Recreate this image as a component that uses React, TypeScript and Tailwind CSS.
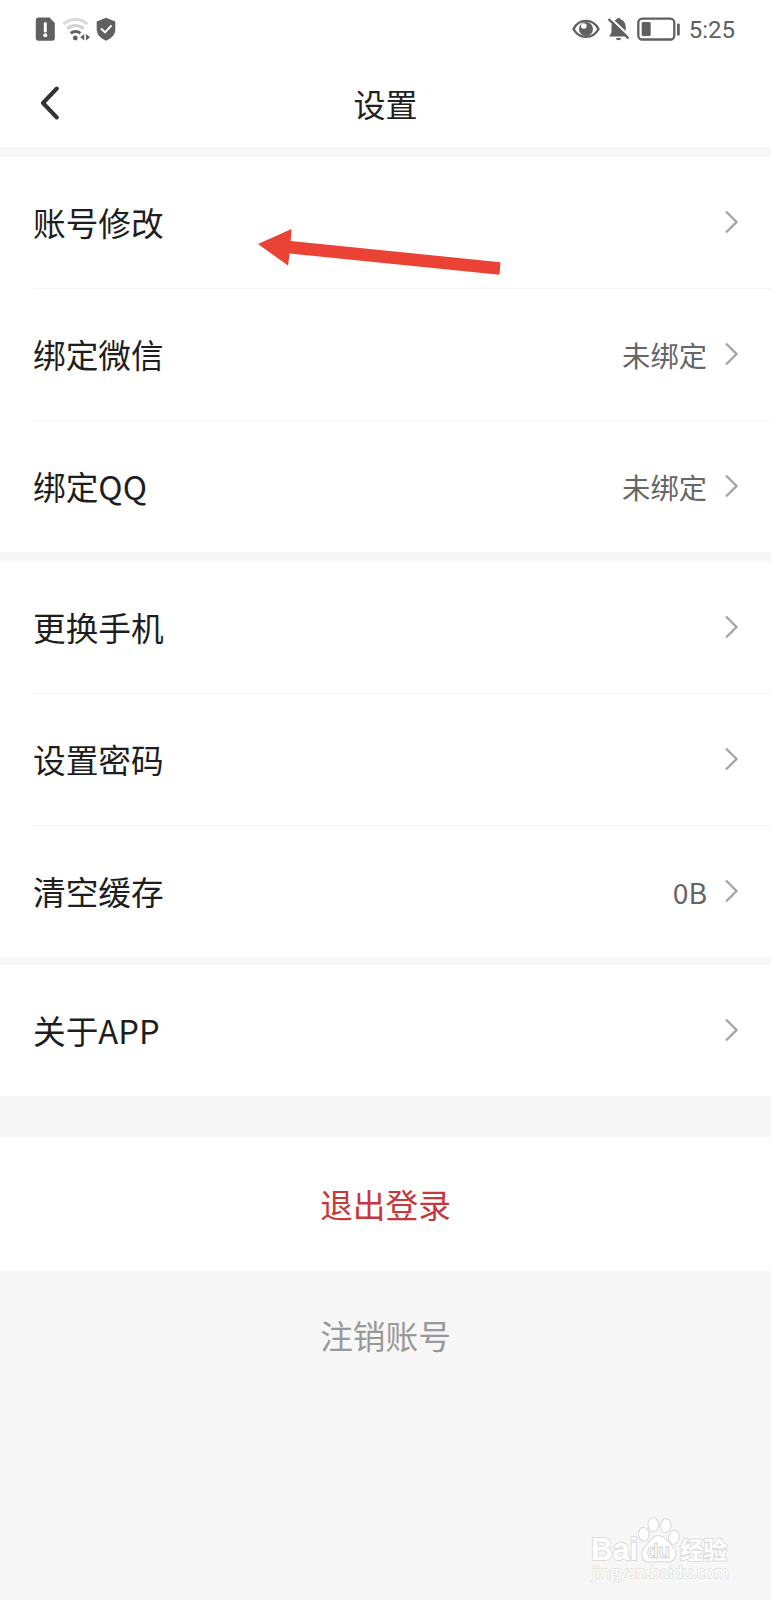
type Row = {
  label: string;
  value?: string;
};

const accountRows: Row[] = [
  { label: "账号修改" },
  { label: "绑定微信", value: "未绑定" },
  { label: "绑定QQ", value: "未绑定" },
];

const deviceRows: Row[] = [
  { label: "更换手机" },
  { label: "设置密码" },
  { label: "清空缓存", value: "0B" },
];

const aboutRows: Row[] = [{ label: "关于APP" }];

function StatusBar() {
  return (
    <div className="flex h-[58px] items-center justify-between pl-[35px] pr-9 text-[#606060]">
      <div className="flex items-center">
        <svg width="20" height="24" viewBox="0 0 20 24">
          <path
            d="M3.500.5h11L19.800 6v15a2.700 2.700 0 0 1-2.700 2.700H3.500A2.700 2.700 0 0 1 .8 21V3.200A2.700 2.700 0 0 1 3.500.5z"
            fill="currentColor"
          />
          <path d="M10.300 6.500v7.500" stroke="#fff" strokeWidth="3" strokeLinecap="round" />
          <circle cx="10.300" cy="18.300" r="2" fill="#fff" />
        </svg>
        <svg className="ml-[7px]" width="28" height="24" viewBox="0 0 28 24" fill="none">
          <path d="M1.500 7.200a17.500 17.500 0 0 1 24 0" stroke="#dadada" strokeWidth="3" />
          <path d="M5.300 11.800a12 12 0 0 1 16.400 0" stroke="#d2d2d2" strokeWidth="3" />
          <path d="M8.800 16.300a7 7 0 0 1 9.600 0" stroke="currentColor" strokeWidth="3" />
          <circle cx="13.300" cy="21" r="2.400" fill="currentColor" />
          <path d="M22.300 17v6.500l-4-3.250zM24 17v6.500l4-3.250z" fill="currentColor" />
        </svg>
        <svg className="ml-[6px]" width="20" height="24" viewBox="0 0 20 24">
          <path
            d="M10 .8 19.300 4.500v8c0 5-4 9-9.300 11.200C4.700 21.500.7 17.500.7 12.500v-8z"
            fill="currentColor"
          />
          <path
            d="m5.500 12 3.500 3.300 6-6.300"
            fill="none"
            stroke="#fff"
            strokeWidth="1.900"
            strokeLinecap="round"
          />
        </svg>
      </div>
      <div className="flex items-center">
        <svg width="28" height="20" viewBox="0 0 28 20">
          <path
            d="M1.500 10C7-.8 21-.8 26.500 10 21 20.500 7 20.500 1.500 10z"
            fill="none"
            stroke="currentColor"
            strokeWidth="2.400"
          />
          <circle cx="14" cy="10" r="7" fill="currentColor" />
          <circle cx="11.800" cy="7" r="2.800" fill="#fff" />
        </svg>
        <svg className="ml-[7px]" width="23" height="24" viewBox="0 0 23 24">
          <path
            d="M9.500 2.500C9.700.5 13.500.5 13.700 2.500c3.300 1 5 4 5 7.500v5.500l2 4H2.200l2.300-4V9c0-3.300 1.800-5.600 5-6.500z"
            fill="currentColor"
          />
          <path d="M9 21h5c0 3-5 3-5 0z" fill="currentColor" />
          <path d="M3.500 1 23 19.500" stroke="#fff" strokeWidth="2" />
          <path d="M1.500 2 21.500 21.500" stroke="currentColor" strokeWidth="2.400" />
        </svg>
        <svg className="ml-[7px]" width="44" height="24" viewBox="0 0 44 24">
          <rect x="1.300" y="1.700" width="36" height="20.800" rx="4" fill="none" stroke="currentColor" strokeWidth="2.300" />
          <rect x="4.700" y="5" width="9" height="14" rx="1.500" fill="currentColor" />
          <rect x="40" y="6.500" width="2.800" height="12" rx="1" fill="currentColor" />
        </svg>
        <span className="ml-2 mt-0.5 font-['Roboto',sans-serif] text-2xl leading-6">5:25</span>
      </div>
    </div>
  );
}

function Header() {
  return (
    <header className="flex h-[89px] items-center px-10">
      <svg
        width="20"
        height="34"
        viewBox="0 0 20 34"
        fill="none"
        stroke="#333"
        strokeWidth="4"
        strokeLinecap="round"
        strokeLinejoin="round"
      >
        <path d="M16.800 2.500 3 17l13.800 14.500" />
      </svg>
      <h1 className="flex-1 pr-5 text-center text-[32px] leading-10 text-[#222]">设置</h1>
    </header>
  );
}

function Chevron() {
  return (
    <svg width="14" height="24" viewBox="0 0 14 24" fill="none" stroke="#a6a6a6" strokeWidth="2.400">
      <path d="M1 1.500 11.500 12 1 22.500" />
    </svg>
  );
}

function SettingsGroup({ rows }: { rows: Row[] }) {
  return (
    <section className="bg-white pl-[33px]">
      {rows.map((row) => (
        <div
          key={row.label}
          className="flex h-[132px] items-center border-b border-[#f4f4f4] pb-0.5 pr-8 last:h-[131px] last:border-b-0"
        >
          <span className="flex-1 text-[32.7px] leading-10 text-[#1e1e1e]">{row.label}</span>
          {row.value && (
            <span className="mr-[18px] mt-0.5 text-[28.3px] leading-9 text-[#666]">{row.value}</span>
          )}
          <Chevron />
        </div>
      ))}
    </section>
  );
}

function PointerArrow() {
  return (
    <svg className="absolute left-[256px] top-[226px]" width="248" height="52" viewBox="0 0 248 52">
      <path d="M2 18 35.500 3l-.8 12L244.500 36.200l-1 12.500L33.500 27.500 32 39.500z" fill="#ea4335" />
    </svg>
  );
}

function Watermark() {
  return (
    <svg
      className="absolute bottom-[10px] right-[40px]"
      width="146"
      height="80"
      viewBox="0 0 146 80"
      fill="#fff"
      stroke="#dcdcdc"
      strokeWidth="1.200"
    >
      <g fontFamily="Liberation Sans, sans-serif" fontWeight="700">
        <text
          x="6"
          y="50"
          fontSize="31"
          textLength="47"
          lengthAdjust="spacingAndGlyphs"
          paintOrder="stroke"
          strokeWidth="2"
        >
          Bai
        </text>
        <ellipse cx="58.700" cy="24.300" rx="5.300" ry="7" transform="rotate(-8 58.700 24.300)" />
        <ellipse cx="68.300" cy="14.700" rx="5.300" ry="7.200" />
        <ellipse cx="80.700" cy="15.700" rx="5.300" ry="7" transform="rotate(8 80.700 15.700)" />
        <ellipse cx="88.800" cy="27.300" rx="5.300" ry="7" transform="rotate(12 88.800 27.300)" />
        <path d="M73 25.700c-6.500 0-8 6-11.500 9.500-6.500 5.500-7 17 3.500 17 3.500 0 5-.6 8.500-.6s5.500.6 9 .6c9.500 0 11-10.500 5-16-5-4-6.500-10.500-14.500-10.500z" />
        <text
          x="62"
          y="47.500"
          fontSize="20"
          textLength="23"
          lengthAdjust="spacingAndGlyphs"
          stroke="#d2d2d2"
          strokeWidth="1"
        >
          du
        </text>
      </g>
      <text
        x="95"
        y="48.500"
        fontSize="23.500"
        fontWeight="700"
        fontFamily="Noto Sans CJK SC, sans-serif"
        paintOrder="stroke"
        strokeWidth="2"
      >
        经验
      </text>
      <text
        x="7"
        y="68"
        fontSize="16"
        fontFamily="Open Sans, sans-serif"
        textLength="137"
        lengthAdjust="spacingAndGlyphs"
        paintOrder="stroke"
        stroke="#e2e2e2"
        strokeWidth="1.500"
      >
        jingyan.baidu.com
      </text>
    </svg>
  );
}

export default function App() {
  return (
    <div className="relative h-[1600px] w-[771px] overflow-hidden bg-[#f7f7f7] font-['Noto_Sans_CJK_SC',sans-serif]">
      <div className="bg-white">
        <StatusBar />
        <Header />
      </div>
      <main className="mt-[10px]">
        <SettingsGroup rows={accountRows} />
        <div className="h-[10px]" />
        <SettingsGroup rows={deviceRows} />
        <div className="h-2" />
        <SettingsGroup rows={aboutRows} />
        <button className="mt-[41px] flex h-[134px] w-full items-center justify-center bg-white text-[32.7px] leading-10 text-[#c9373a]">
          退出登录
        </button>
        <button className="mt-11 w-full text-center text-[32.7px] leading-10 text-[#999]">
          注销账号
        </button>
      </main>
      <PointerArrow />
      <Watermark />
    </div>
  );
}
